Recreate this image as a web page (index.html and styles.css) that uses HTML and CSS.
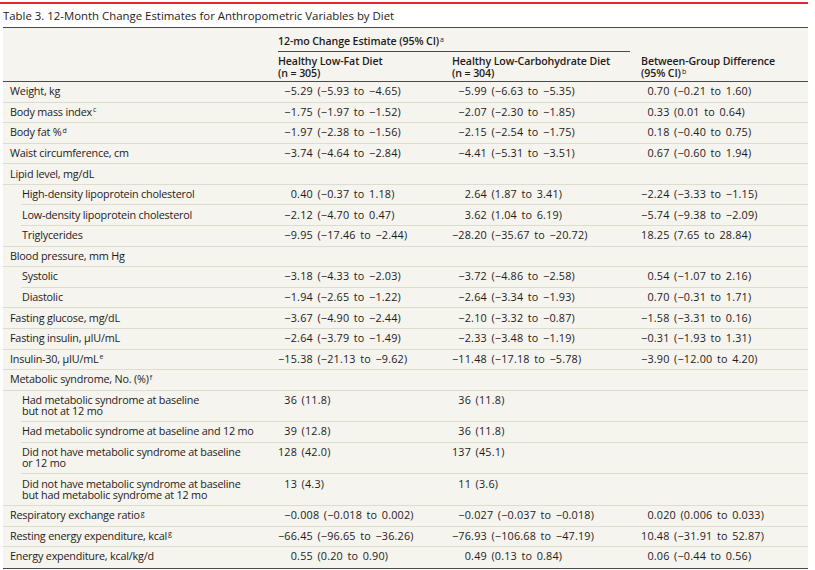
FILE: index.html
```html
<!DOCTYPE html>
<html lang="en">
<head>
<meta charset="utf-8">
<title>Table 3</title>
<link rel="stylesheet" href="styles.css">
</head>
<body>
<div class="figure">
  <div class="title">Table 3. 12-Month Change Estimates for Anthropometric Variables by Diet</div>
  <div class="tbl">
    <div class="thead">
      <div class="h-span">12-mo Change Estimate (95% CI)<sup>a</sup></div>
      <div class="h-c2">Healthy Low-Fat Diet<br>(n = 305)</div>
      <div class="h-c3">Healthy Low-Carbohydrate Diet<br>(n = 304)</div>
      <div class="h-c4">Between-Group Difference<br>(95% CI)<sup>b</sup></div>
    </div>

    <div class="row"><div class="lbl">Weight, kg</div><div class="v"><span class="i">−5</span>.29 (−5.93 to −4.65)</div><div class="v"><span class="i">−5</span>.99 (−6.63 to −5.35)</div><div class="v c4"><span class="i">0</span>.70 (−0.21 to 1.60)</div></div>
    <div class="row"><div class="lbl">Body mass index<sup>c</sup></div><div class="v"><span class="i">−1</span>.75 (−1.97 to −1.52)</div><div class="v"><span class="i">−2</span>.07 (−2.30 to −1.85)</div><div class="v c4"><span class="i">0</span>.33 (0.01 to 0.64)</div></div>
    <div class="row"><div class="lbl">Body fat %<sup>d</sup></div><div class="v"><span class="i">−1</span>.97 (−2.38 to −1.56)</div><div class="v"><span class="i">−2</span>.15 (−2.54 to −1.75)</div><div class="v c4"><span class="i">0</span>.18 (−0.40 to 0.75)</div></div>
    <div class="row"><div class="lbl">Waist circumference, cm</div><div class="v"><span class="i">−3</span>.74 (−4.64 to −2.84)</div><div class="v"><span class="i">−4</span>.41 (−5.31 to −3.51)</div><div class="v c4"><span class="i">0</span>.67 (−0.60 to 1.94)</div></div>
    <div class="row"><div class="lbl">Lipid level, mg/dL</div><div class="v"></div><div class="v"></div><div class="v c4"></div></div>
    <div class="row sub"><div class="lbl">High-density lipoprotein cholesterol</div><div class="v"><span class="i">0</span>.40 (−0.37 to 1.18)</div><div class="v"><span class="i">2</span>.64 (1.87 to 3.41)</div><div class="v c4"><span class="i">−2</span>.24 (−3.33 to −1.15)</div></div>
    <div class="row sub"><div class="lbl">Low-density lipoprotein cholesterol</div><div class="v"><span class="i">−2</span>.12 (−4.70 to 0.47)</div><div class="v"><span class="i">3</span>.62 (1.04 to 6.19)</div><div class="v c4"><span class="i">−5</span>.74 (−9.38 to −2.09)</div></div>
    <div class="row sub last"><div class="lbl">Triglycerides</div><div class="v"><span class="i">−9</span>.95 (−17.46 to −2.44)</div><div class="v"><span class="i">−28</span>.20 (−35.67 to −20.72)</div><div class="v c4"><span class="i">18</span>.25 (7.65 to 28.84)</div></div>
    <div class="row"><div class="lbl">Blood pressure, mm Hg</div><div class="v"></div><div class="v"></div><div class="v c4"></div></div>
    <div class="row sub"><div class="lbl">Systolic</div><div class="v"><span class="i">−3</span>.18 (−4.33 to −2.03)</div><div class="v"><span class="i">−3</span>.72 (−4.86 to −2.58)</div><div class="v c4"><span class="i">0</span>.54 (−1.07 to 2.16)</div></div>
    <div class="row sub last"><div class="lbl">Diastolic</div><div class="v"><span class="i">−1</span>.94 (−2.65 to −1.22)</div><div class="v"><span class="i">−2</span>.64 (−3.34 to −1.93)</div><div class="v c4"><span class="i">0</span>.70 (−0.31 to 1.71)</div></div>
    <div class="row"><div class="lbl">Fasting glucose, mg/dL</div><div class="v"><span class="i">−3</span>.67 (−4.90 to −2.44)</div><div class="v"><span class="i">−2</span>.10 (−3.32 to −0.87)</div><div class="v c4"><span class="i">−1</span>.58 (−3.31 to 0.16)</div></div>
    <div class="row"><div class="lbl">Fasting insulin, µIU/mL</div><div class="v"><span class="i">−2</span>.64 (−3.79 to −1.49)</div><div class="v"><span class="i">−2</span>.33 (−3.48 to −1.19)</div><div class="v c4"><span class="i">−0</span>.31 (−1.93 to 1.31)</div></div>
    <div class="row"><div class="lbl">Insulin-30, µIU/mL<sup>e</sup></div><div class="v"><span class="i">−15</span>.38 (−21.13 to −9.62)</div><div class="v"><span class="i">−11</span>.48 (−17.18 to −5.78)</div><div class="v c4"><span class="i">−3</span>.90 (−12.00 to 4.20)</div></div>
    <div class="row"><div class="lbl">Metabolic syndrome, No. (%)<sup>f</sup></div><div class="v"></div><div class="v"></div><div class="v c4"></div></div>
    <div class="row sub"><div class="lbl">Had metabolic syndrome at baseline<br>but not at 12 mo</div><div class="v"><span class="i">36</span> (11.8)</div><div class="v"><span class="i">36</span> (11.8)</div><div class="v c4"></div></div>
    <div class="row sub"><div class="lbl">Had metabolic syndrome at baseline and 12 mo</div><div class="v"><span class="i">39</span> (12.8)</div><div class="v"><span class="i">36</span> (11.8)</div><div class="v c4"></div></div>
    <div class="row sub"><div class="lbl">Did not have metabolic syndrome at baseline<br>or 12 mo</div><div class="v"><span class="i">128</span> (42.0)</div><div class="v"><span class="i">137</span> (45.1)</div><div class="v c4"></div></div>
    <div class="row sub last"><div class="lbl">Did not have metabolic syndrome at baseline<br>but had metabolic syndrome at 12 mo</div><div class="v"><span class="i">13</span> (4.3)</div><div class="v"><span class="i">11</span> (3.6)</div><div class="v c4"></div></div>
    <div class="row"><div class="lbl">Respiratory exchange ratio<sup>g</sup></div><div class="v"><span class="i">−0</span>.008 (−0.018 to 0.002)</div><div class="v"><span class="i">−0</span>.027 (−0.037 to −0.018)</div><div class="v c4"><span class="i">0</span>.020 (0.006 to 0.033)</div></div>
    <div class="row"><div class="lbl">Resting energy expenditure, kcal<sup>g</sup></div><div class="v"><span class="i">−66</span>.45 (−96.65 to −36.26)</div><div class="v"><span class="i">−76</span>.93 (−106.68 to −47.19)</div><div class="v c4"><span class="i">10</span>.48 (−31.91 to 52.87)</div></div>
    <div class="row"><div class="lbl">Energy expenditure, kcal/kg/d</div><div class="v"><span class="i">0</span>.55 (0.20 to 0.90)</div><div class="v"><span class="i">0</span>.49 (0.13 to 0.84)</div><div class="v c4"><span class="i">0</span>.06 (−0.44 to 0.56)</div></div>
  </div>
</div>
</body>
</html>
```
FILE: styles.css
```css
body {
  margin: 0;
  background: #ffffff;
  font-family: "Open Sans", "Noto Sans", sans-serif;
  color: #1f1b1c;
}

.figure {
  width: 808px;
  margin-top: 2px;
  border-top: 2px solid #e2282d;
}

.title {
  height: 23px;
  line-height: 23px;
  font-size: 11.4px;
  font-weight: 500;
  padding-left: 3px;
  white-space: nowrap;
}

.tbl {
  margin-left: 3px;
  width: 805px;
  background: #f5f4ee;
  border-top: 1px solid #4a4a4a;
  border-bottom: 1px solid #4a4a4a;
  font-size: 10.8px;
  font-weight: 500;
}

.thead {
  display: grid;
  grid-template-columns: 275px 174px 189px 167px;
  border-bottom: 1px solid #4a4a4a;
  font-size: 10.6px;
  font-weight: 600;
  line-height: 12px;
  letter-spacing: -0.1px;
}

.thead sup,
.lbl sup {
  font-size: 7px;
  line-height: 0;
  vertical-align: 3.5px;
  font-weight: 400;
  margin-left: 1px;
}

.h-span {
  grid-column: 2 / 4;
  grid-row: 1;
  padding: 7px 0 4px;
  margin-right: 11px;
  border-bottom: 1px solid #4a4a4a;
}

.h-c2,
.h-c3 {
  grid-row: 2;
  padding: 3px 0 2px;
}

.h-c2 { grid-column: 2; }
.h-c3 { grid-column: 3; }

.h-c4 {
  grid-column: 4;
  grid-row: 1 / 3;
  align-self: end;
  padding: 0 0 2px;
}

.row {
  display: grid;
  grid-template-columns: 275px 174px 189px 167px;
  line-height: 11px;
  padding: 3.2px 0 5.4px;
  border-bottom: 1px solid #dedbcf;
}

.row:last-child {
  border-bottom: none;
  padding-bottom: 6.8px;
}

.row.sub:not(.last) {
  border-bottom: none;
  padding-bottom: 6.4px;
  background: linear-gradient(#dedbcf, #dedbcf) no-repeat right bottom / calc(100% - 18px) 1px;
}

.lbl {
  padding-left: 7px;
  white-space: nowrap;
  letter-spacing: -0.2px;
}

.row.sub .lbl {
  padding-left: 19px;
}

.v {
  white-space: nowrap;
  word-spacing: 1.5px;
  letter-spacing: 0.2px;
}

.i {
  display: inline-block;
  width: 19.1px;
  text-align: right;
}

.c4 .i {
  width: 12.8px;
}
```
